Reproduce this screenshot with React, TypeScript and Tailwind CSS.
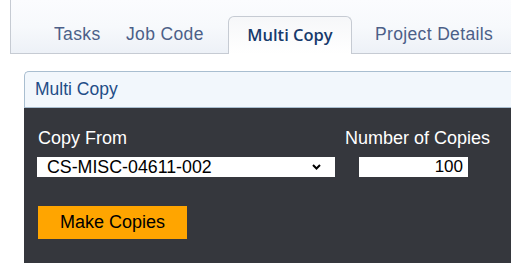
import { useState } from "react";

const tabs = [
  { label: "Tasks", cls: "w-[46px]" },
  { label: "Job Code", cls: "w-[80px] ml-[26px]" },
  { label: "Multi Copy", cls: "" },
  { label: "Project Details", cls: "w-[125px] ml-[23px]" },
];

export default function App() {
  const [active] = useState("Multi Copy");

  return (
    <div className="w-[511px] h-[264px] overflow-hidden bg-white font-['Liberation_Sans',Arial,sans-serif]">
      <div className="ml-[10px] h-[54px] flex items-end pl-[43px] border-l border-b border-[#c6cbd3] bg-linear-to-b from-[#fbfcfe] via-[#f7f9fc] to-[#edf1f7]">
        {tabs.map((t) =>
          t.label === active ? (
            <div
              key={t.label}
              className="h-[38px] w-[124px] shrink-0 -mb-px ml-[22px] flex items-center justify-center rounded-t-[6px] border border-b-0 border-[#c6cbd3] bg-linear-to-b from-[#f6f7f9] to-white font-['Open_Sans',sans-serif] text-[16.5px] font-semibold text-[#173a6c]"
            >
              {t.label}
            </div>
          ) : (
            <div
              key={t.label}
              className={`h-[38px] shrink-0 whitespace-nowrap flex items-center text-[17.5px] tracking-[0.35px] text-[#4c5f88] ${t.cls}`}
            >
              {t.label}
            </div>
          )
        )}
      </div>

      <div className="ml-[24px] mt-[17px]">
        <div className="h-[37px] flex items-center pl-[10px] rounded-tl-[5px] border-t border-l border-b border-[#a9bed0] bg-[#f2f7fc] text-[17.5px] text-[#1f4d87]">
          Multi Copy
        </div>
        <div className="h-[155px] bg-[#35373d] pl-[13px] pt-[20px]">
          <div className="flex gap-[10px]">
            <div className="flex flex-col">
              <div className="h-[20px] leading-[20px] text-[18px] text-white pl-[1px]">Copy From</div>
              <div className="mt-[9px] h-[20px] w-[298px] bg-white flex items-center justify-between pl-[10px] pr-[14px] text-[17.8px] text-black leading-[20px]">
                <span>CS-MISC-04611-002</span>
                <svg width="9" height="6" viewBox="0 0 9 6" fill="none">
                  <path d="M1 1l3.5 3.5L8 1" stroke="#000" strokeWidth="2" />
                </svg>
              </div>
            </div>
            <div className="flex flex-col">
              <div className="h-[20px] leading-[20px] text-[18px] text-white">Number of Copies</div>
              <div className="mt-[9px] ml-[14px] h-[20px] w-[109px] bg-white flex items-center justify-end pr-[5px] text-[17px] text-black leading-[20px]">
                100
              </div>
            </div>
          </div>
          <button className="mt-[29px] ml-[1px] h-[33px] w-[149px] bg-[#ffa500] text-[18px] text-black">
            Make Copies
          </button>
        </div>
      </div>
    </div>
  );
}
